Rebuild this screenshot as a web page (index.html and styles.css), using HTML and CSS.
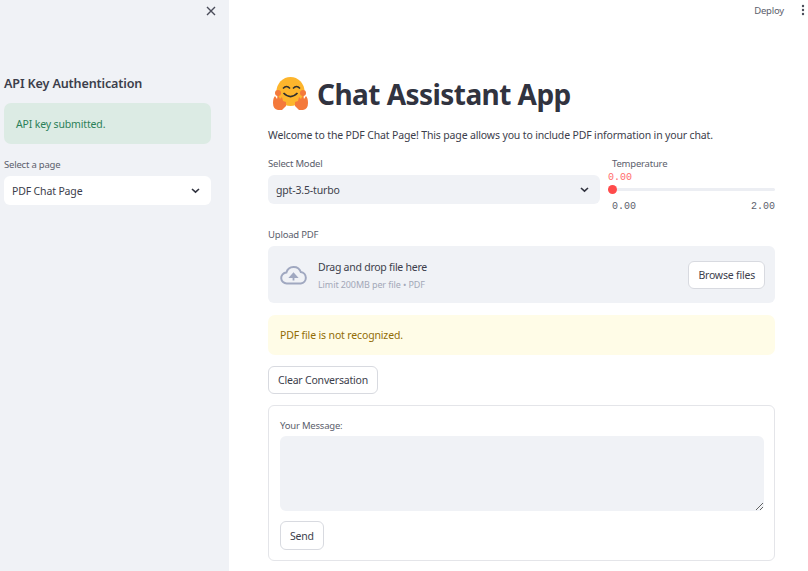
FILE: index.html
```html
<!DOCTYPE html>
<html>
<head>
  <meta charset="utf-8">
  <title>Chat Assistant App</title>
  <link rel="stylesheet" href="styles.css">
</head>
<body>
  <aside class="sidebar">
    <div class="sidebar-top">
      <svg class="close" width="10" height="10" viewBox="0 0 10 10"><path d="M1 1l8 8M9 1l-8 8" stroke="#4a4c59" stroke-width="1.4" fill="none"/></svg>
    </div>
    <h3 class="side-title">API Key Authentication</h3>
    <div class="alert success">API key submitted.</div>
    <label class="label side-label">Select a page</label>
    <div class="select white">
      <span>PDF Chat Page</span>
      <svg width="9" height="6" viewBox="0 0 9 6"><path d="M1 1l3.5 3.2L8 1" stroke="#31333f" stroke-width="1.6" fill="none"/></svg>
    </div>
  </aside>
  <main class="main">
    <header class="topbar">
      <span class="deploy">Deploy</span>
      <svg width="4" height="12" viewBox="0 0 4 12"><circle cx="2" cy="2" r="1.2" fill="#4a4c59"/><circle cx="2" cy="6" r="1.2" fill="#4a4c59"/><circle cx="2" cy="10" r="1.2" fill="#4a4c59"/></svg>
    </header>
    <div class="content">
      <h1 class="title">
        <svg class="emoji" width="36" height="36" viewBox="0 0 36 36">
          <ellipse cx="18.5" cy="15.5" rx="14" ry="14.5" fill="#fdb52c"/>
          <circle cx="6" cy="17" r="3" fill="#f4793b"/>
          <circle cx="31" cy="17" r="3" fill="#f4793b"/>
          <path d="M11 12.5q3.5-4 7 0M21 12.5q3.5-4 7 0" stroke="#2f2f2f" stroke-width="1.5" fill="none"/>
          <path d="M11.5 17q7 7 14 0" stroke="#2f2f2f" stroke-width="1.7" fill="none"/>
          <path d="M1 27q0-5 2-7l2 3 1-4 2 4 2-2 1 4 3 1 0 4-4 4H6q-5-1-5-7zM36 27q0-5-2-7l-2 3-1-4-2 4-2-2-1 4-3 1 0 4 4 4h4q5-1 5-7z" fill="#f4793b"/>
        </svg>
        <span>Chat Assistant App</span>
      </h1>
      <p class="intro">Welcome to the PDF Chat Page! This page allows you to include PDF information in your chat.</p>
      <div class="controls">
        <div class="model">
          <label class="label">Select Model</label>
          <div class="select grey">
            <span>gpt-3.5-turbo</span>
            <svg width="9" height="6" viewBox="0 0 9 6"><path d="M1 1l3.5 3.2L8 1" stroke="#31333f" stroke-width="1.6" fill="none"/></svg>
          </div>
        </div>
        <div class="temp">
          <label class="label">Temperature</label>
          <div class="mono value">0.00</div>
          <div class="track"><span class="thumb"></span></div>
          <div class="range mono"><span>0.00</span><span>2.00</span></div>
        </div>
      </div>
      <label class="label upload-label">Upload PDF</label>
      <div class="dropzone">
        <svg class="cloud" width="27" height="20" viewBox="0 0 27 20">
          <path d="M7 18.5a5.5 5.5 0 0 1-.6-11A7.6 7.6 0 0 1 20.8 7a5.8 5.8 0 0 1 0 11.5z" fill="none" stroke="#a0a8c0" stroke-width="2"/>
          <path d="M13.5 15.5V10M10.4 12l3.1-3.4 3.1 3.4z" stroke="#a0a8c0" stroke-width="1.8" fill="#a0a8c0"/>
        </svg>
        <div class="drop-text">
          <div class="drop-main">Drag and drop file here</div>
          <div class="drop-sub">Limit 200MB per file • PDF</div>
        </div>
        <button class="btn browse">Browse files</button>
      </div>
      <div class="alert warning">PDF file is not recognized.</div>
      <button class="btn clear">Clear Conversation</button>
      <form class="chat-form">
        <label class="label">Your Message:</label>
        <textarea class="message"></textarea>
        <button class="btn send" type="button">Send</button>
      </form>
    </div>
  </main>
</body>
</html>
```

FILE: styles.css
```css
* { box-sizing: border-box; }
html, body {
  margin: 0;
  height: 571px;
  overflow: hidden;
}
body {
  display: flex;
  background: #fff;
  color: #3c3e4b;
  font-family: "Noto Sans", sans-serif;
  font-size: 10.5px;
  letter-spacing: -.15px;
}
.sidebar {
  width: 229px;
  height: 571px;
  flex: none;
  background: #f0f2f6;
  padding: 0 18px 0 4px;
}
.sidebar-top {
  height: 75px;
  display: flex;
  justify-content: flex-end;
  padding: 6px 0 0;
  margin-right: -5px;
}
.side-title {
  margin: 0;
  font-size: 12.6px;
  line-height: 18px;
  font-weight: 600;
}
.alert {
  height: 41px;
  border-radius: 7px;
  padding: 0 12px;
  display: flex;
  align-items: center;
}
.success {
  margin-top: 10px;
  background: #dcebe4;
  color: #2b8058;
}
.label {
  display: block;
  font-size: 9.5px;
  line-height: 13px;
  letter-spacing: -.2px;
  color: #5b5e6c;
}
.side-label { margin-top: 14px; }
.select {
  height: 29px;
  border-radius: 6px;
  padding: 0 11px 0 8px;
  margin-top: 5px;
  display: flex;
  align-items: center;
  justify-content: space-between;
}
.white { background: #fff; }
.grey { background: #f0f2f6; }
.main { flex: 1; min-width: 0; }
.topbar {
  height: 20px;
  display: flex;
  justify-content: flex-end;
  align-items: center;
  gap: 17px;
  padding-right: 3px;
}
.deploy { font-size: 9.5px; letter-spacing: -.2px; color: #5b5e6c; }
.content {
  width: 507px;
  margin-left: 39px;
}
.title {
  margin: 53px 0 0;
  height: 42px;
  display: flex;
  align-items: center;
  gap: 9px;
  font-size: 28px;
  font-weight: 700;
  letter-spacing: -.55px;
  padding-left: 4px;
}
.title span { color: #31333f; }
.emoji { flex: none; }
.intro {
  margin: 12px 0 0;
  line-height: 16px;
}
.controls {
  display: flex;
  gap: 12px;
  margin-top: 14px;
}
.model { width: 332px; }
.temp { flex: 1; }
.mono {
  font-family: "Liberation Mono", monospace;
  font-size: 10px;
  letter-spacing: 0;
}
.value {
  color: #ff6b6b;
  line-height: 11px;
  margin-top: 2px;
  margin-left: -4px;
}
.track {
  height: 3px;
  margin-top: 5px;
  background: #eceef3;
  border-radius: 2px;
  position: relative;
}
.thumb {
  position: absolute;
  left: -4px;
  top: -3px;
  width: 9px;
  height: 9px;
  border-radius: 50%;
  background: #ff4b4b;
}
.range {
  display: flex;
  justify-content: space-between;
  color: #5b5e6c;
  line-height: 11px;
  margin-top: 10px;
}
.upload-label { margin-top: 16px; }
.dropzone {
  height: 57px;
  margin-top: 5px;
  background: #f0f2f6;
  border-radius: 6px;
  padding: 0 10px 0 12px;
  display: flex;
  align-items: center;
}
.cloud { flex: none; }
.drop-text { flex: 1; margin-left: 11px; padding-top: 2px; }
.drop-main { line-height: 15px; margin-bottom: 4px; letter-spacing: -.25px; }
.drop-sub { font-size: 9px; line-height: 12px; letter-spacing: -.1px; color: #a3a8b8; }
.btn {
  display: block;
  height: 28px;
  padding: 0 9px;
  background: #fff;
  border: 1px solid #d8dae0;
  border-radius: 6px;
  color: #3c3e4b;
  font-family: inherit;
  font-size: 10.5px;
  letter-spacing: -.2px;
}
.warning {
  height: 40px;
  margin-top: 12px;
  background: #fffce7;
  color: #926c05;
}
.clear { margin-top: 11px; }
.chat-form {
  margin-top: 11px;
  height: 156px;
  border: 1px solid #e4e5e9;
  border-radius: 6px;
  padding: 13px 10px 0 11px;
}
.message {
  display: block;
  width: 100%;
  height: 75px;
  margin-top: 4px;
  background: #f0f2f6;
  border: 0;
  border-radius: 6px;
}
.send { margin-top: 10px; height: 29px; }
```
